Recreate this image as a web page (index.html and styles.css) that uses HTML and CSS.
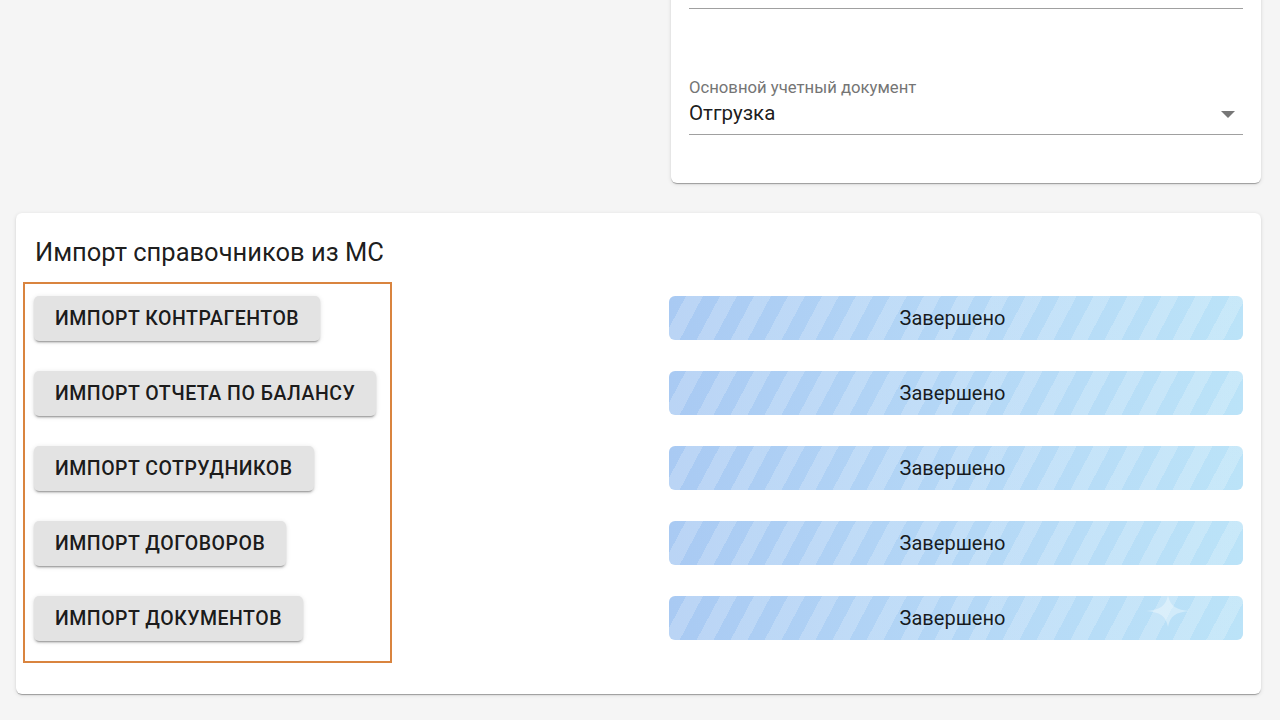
FILE: index.html
```html
<!DOCTYPE html>
<html lang="ru">
<head>
<meta charset="utf-8">
<title>Импорт справочников</title>
<link rel="stylesheet" href="styles.css">
</head>
<body>
<div class="page">
  <div class="top-row">
    <div class="card settings">
      <div class="field field-first"></div>
      <div class="field select-field">
        <div class="label">Основной учетный документ</div>
        <div class="select">
          <span class="value">Отгрузка</span>
          <span class="arrow"></span>
        </div>
      </div>
    </div>
  </div>

  <div class="card import">
    <h2 class="title">Импорт справочников из МС</h2>
    <div class="import-body">
      <div class="buttons-box">
        <button class="btn">Импорт контрагентов</button>
        <button class="btn">Импорт отчета по балансу</button>
        <button class="btn">Импорт сотрудников</button>
        <button class="btn">Импорт договоров</button>
        <button class="btn">Импорт документов</button>
      </div>
      <div class="bars">
        <div class="bar"><span class="bar-text">Завершено</span></div>
        <div class="bar"><span class="bar-text">Завершено</span></div>
        <div class="bar"><span class="bar-text">Завершено</span></div>
        <div class="bar"><span class="bar-text">Завершено</span></div>
        <div class="bar"><span class="bar-text">Завершено</span>
          <svg class="sparkle" viewBox="0 0 44 32" width="44" height="32"><path d="M22 0 C24 11 30 15 44 16 C30 17 24 21 22 32 C20 21 14 17 0 16 C14 15 20 11 22 0 Z" fill="#ffffff" fill-opacity="0.35"/></svg>
        </div>
      </div>
    </div>
  </div>
</div>
</body>
</html>
```

FILE: styles.css
```css
* { box-sizing: border-box; }
html, body { margin: 0; padding: 0; }
body {
  background: #f5f5f5;
  font-family: Roboto, "Noto Sans", "Liberation Sans", sans-serif;
  color: rgba(0,0,0,0.87);
  width: 1280px;
  height: 720px;
  overflow: hidden;
}
.page {
  padding: 0 19px 0 16px;
}
.top-row {
  display: flex;
  justify-content: flex-end;
}
.card {
  background: #fff;
  border-radius: 6px;
  box-shadow: 0 2px 1px -1px rgba(0,0,0,0.2), 0 1px 1px 0 rgba(0,0,0,0.14), 0 1px 4px 0 rgba(0,0,0,0.12);
}
.settings {
  width: 590px;
  margin-top: -40px;
  padding: 0 18px 48px 18px;
}
.field-first {
  height: 49px;
  border-bottom: 1.5px solid #a0a0a0;
}
.select-field {
  margin-top: 69px;
}
.label {
  font-size: 16.7px;
  line-height: 20px;
  color: #757575;
}
.select {
  margin-top: 3px;
  display: flex;
  align-items: center;
  justify-content: space-between;
  padding-bottom: 8px;
  border-bottom: 1.5px solid #a0a0a0;
}
.value {
  font-size: 20.5px;
  line-height: 25px;
  color: rgba(0,0,0,0.9);
}
.arrow {
  width: 0;
  height: 0;
  border-left: 7px solid transparent;
  border-right: 7px solid transparent;
  border-top: 7px solid #777;
  margin-right: 8px;
  margin-top: 2px;
}
.import {
  margin-top: 30px;
  padding: 24px 18px 31px 7px;
}
.title {
  margin: 0;
  padding-left: 12px;
  font-size: 25.5px;
  line-height: 30px;
  font-weight: 400;
  color: rgba(0,0,0,0.9);
}
.import-body {
  margin-top: 15px;
  display: flex;
  justify-content: space-between;
  align-items: flex-start;
}
.buttons-box {
  width: 369px;
  border: 2px solid #d9843f;
  padding: 12px 0 20px 9px;
  display: flex;
  flex-direction: column;
  align-items: flex-start;
  gap: 30px;
}
.btn {
  height: 45px;
  padding: 0 21px;
  border: none;
  border-radius: 5px;
  background: #e3e3e3;
  font-family: Roboto, "Noto Sans", "Liberation Sans", sans-serif;
  font-size: 19.5px;
  font-weight: 500;
  letter-spacing: 0.5px;
  text-transform: uppercase;
  color: rgba(0,0,0,0.9);
  box-shadow: 0 3px 1px -2px rgba(0,0,0,0.2), 0 2px 2px 0 rgba(0,0,0,0.14), 0 1px 5px 0 rgba(0,0,0,0.12);
  cursor: pointer;
}
.bars {
  width: 574px;
  padding-top: 14px;
  display: flex;
  flex-direction: column;
  gap: 31px;
}
.bar {
  position: relative;
  height: 44px;
  border-radius: 6px;
  display: flex;
  align-items: center;
  justify-content: center;
  font-size: 20px;
  color: rgba(0,0,0,0.88);
  background:
    repeating-linear-gradient(118deg, rgba(255,255,255,0) 0 15px, rgba(255,255,255,0.2) 15px 30px),
    linear-gradient(90deg, #a9caf3 0%, #b4d7f6 50%, #bbe3f8 100%);
  overflow: hidden;
}
.bar-text {
  margin-right: 7px;
}
.sparkle {
  position: absolute;
  left: 477px;
  top: -1px;
}
```
